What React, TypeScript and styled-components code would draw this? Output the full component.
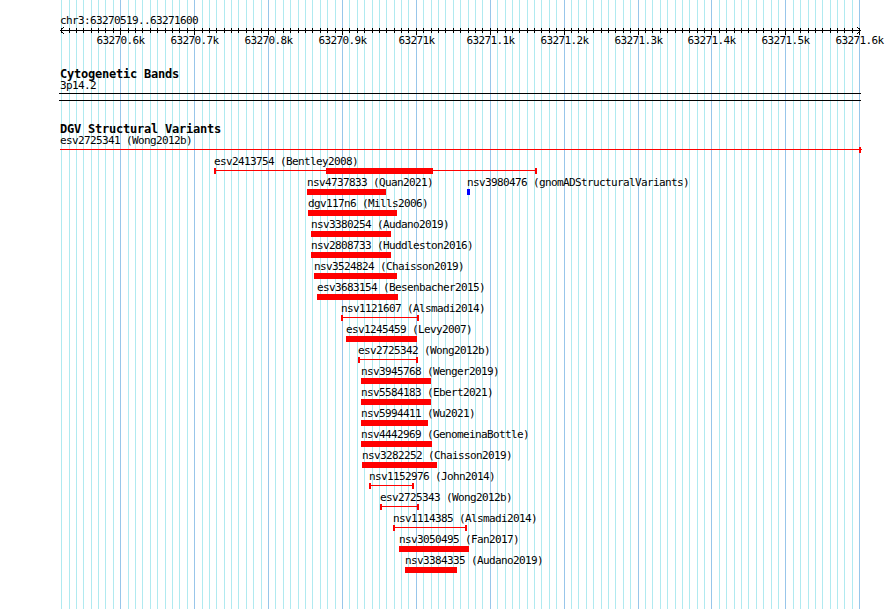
import React from 'react';
import styled, { createGlobalStyle } from 'styled-components';

const GlobalStyle = createGlobalStyle`
  html, body { margin: 0; padding: 0; background: #ffffff; }
  body {
    font-family: "DejaVu Sans Mono", "Liberation Mono", monospace;
    color: #000000;
  }
`;

const BP0 = 63270519;
const BP1 = 63271600;
const X0 = 60.4;
const PX_PER_BP = 0.739;
const LEFT = 60;
const px = (bp: number) => Math.round(X0 + (bp - BP0) * PX_PER_BP);

const RED = '#ff0000';
const BLUE = '#0000ff';
const GRID_MINOR = '#b0eaf0';
const GRID_MAJOR = '#98c6ea';

const smallText = `
  font-family: "DejaVu Sans Mono", "Liberation Mono", monospace;
  font-size: 11px;
  letter-spacing: -0.62px;
  white-space: nowrap;
`;

const Page = styled.div`
  position: relative;
  width: 890px;
  height: 609px;
  overflow: hidden;
  background: #ffffff;
`;

const GridLayer = styled.svg`
  position: absolute;
  left: 0;
  top: 0;
  width: 890px;
  height: 609px;
  z-index: 0;
`;

const Column = styled.div`
  position: relative;
  z-index: 1;
  padding-left: ${LEFT}px;
  width: 801px;
`;

const Ruler = styled.div`
  padding-top: 14px;
`;

const PositionLabel = styled.div`
  ${smallText}
  line-height: 14px;
  height: 14px;
`;

const Scale = styled.div`
  position: relative;
  height: 22px;
`;

const ScaleDrawing = styled.svg`
  position: absolute;
  left: 0;
  top: 0;
  overflow: visible;
`;

const TickLabel = styled.span`
  ${smallText}
  position: absolute;
  top: 7px;
  line-height: 12px;
  transform: translateX(-50%);
`;

const Track = styled.section<{ $gap: number }>`
  margin-top: ${(p) => p.$gap}px;
`;

const TrackTitle = styled.h2`
  margin: 0;
  font-family: "DejaVu Sans Mono", "Liberation Mono", monospace;
  font-size: 12px;
  letter-spacing: -0.22px;
  font-weight: bold;
  line-height: 12px;
  height: 12px;
  white-space: nowrap;
`;

const FeatureRow = styled.div`
  position: relative;
  height: 21px;
`;

const Feature = styled.div`
  position: absolute;
  top: 0;
  display: flex;
  flex-direction: column;
`;

const FeatureLabel = styled.span`
  ${smallText}
  display: block;
  line-height: 12px;
  height: 12px;
`;

const Glyph = styled.div`
  position: relative;
  height: 9px;
`;

const Bar = styled.div<{ $color: string }>`
  height: 6px;
  background: ${(p) => p.$color};
`;

const Span = styled.div`
  position: relative;
  height: 6px;
  &::before {
    content: '';
    position: absolute;
    left: 0;
    right: 0;
    top: 2px;
    height: 1px;
    background: ${RED};
  }
`;

const Cap = styled.div<{ $side: 'left' | 'right' }>`
  position: absolute;
  top: 0;
  ${(p) => p.$side}: 0;
  width: 2px;
  height: 6px;
  background: ${RED};
`;

const Thick = styled.div`
  position: absolute;
  top: 0;
  height: 6px;
  background: ${RED};
`;

const BandBox = styled.div`
  margin: 1px 0 0 -1px;
  width: 802px;
  height: 6px;
  border-top: 1px solid #000000;
  border-bottom: 1px solid #000000;
`;

type Feat = {
  id: string;
  src: string;
  x: number;
  end: number;
  kind: 'bar' | 'span';
  color?: string;
  thick?: [number, number];
  capLeft?: boolean;
  capRightInset?: number;
};

const bar = (id: string, src: string, x: number, end: number, color = RED): Feat => ({
  id, src, x, end, kind: 'bar', color,
});
const span = (id: string, src: string, x: number, end: number, thick?: [number, number]): Feat => ({
  id, src, x, end, kind: 'span', thick, capLeft: true,
});

const rows: Feat[][] = [
  [{ id: 'esv2725341', src: 'Wong2012b', x: 60, end: 862, kind: 'span', capLeft: false, capRightInset: 1 }],
  [span('esv2413754', 'Bentley2008', 214, 537, [326, 433])],
  [bar('nsv4737833', 'Quan2021', 307, 386), bar('nsv3980476', 'gnomADStructuralVariants', 467, 470, BLUE)],
  [bar('dgv117n6', 'Mills2006', 308, 397)],
  [bar('nsv3380254', 'Audano2019', 311, 391)],
  [bar('nsv2808733', 'Huddleston2016', 311, 391)],
  [bar('nsv3524824', 'Chaisson2019', 314, 397)],
  [bar('esv3683154', 'Besenbacher2015', 317, 398)],
  [span('nsv1121607', 'Alsmadi2014', 341, 419)],
  [bar('esv1245459', 'Levy2007', 346, 417)],
  [span('esv2725342', 'Wong2012b', 358, 418)],
  [bar('nsv3945768', 'Wenger2019', 361, 431)],
  [bar('nsv5584183', 'Ebert2021', 361, 431)],
  [bar('nsv5994411', 'Wu2021', 361, 428)],
  [bar('nsv4442969', 'GenomeinaBottle', 361, 432)],
  [bar('nsv3282252', 'Chaisson2019', 362, 437)],
  [span('nsv1152976', 'John2014', 369, 414)],
  [span('esv2725343', 'Wong2012b', 380, 419)],
  [span('nsv1114385', 'Alsmadi2014', 393, 467)],
  [bar('nsv3050495', 'Fan2017', 399, 469)],
  [bar('nsv3384335', 'Audano2019', 405, 457)],
];

const gridPositions: { x: number; major: boolean }[] = [];
for (let bp = 63270520; bp <= BP1; bp += 10) {
  gridPositions.push({ x: px(bp), major: bp % 100 === 0 });
}

const majorLabels = gridPositions
  .map((g, i) => ({ ...g, bp: 63270520 + i * 10 }))
  .filter((g) => g.major)
  .map((g) => {
    const k = g.bp / 1000;
    const text = Number.isInteger(k) ? `${k}k` : `${k.toFixed(1)}k`;
    return { x: g.x, text };
  });

function Grid() {
  return (
    <GridLayer viewBox="0 0 890 609" shapeRendering="crispEdges">
      {gridPositions.map((g) => (
        <line
          key={g.x}
          x1={g.x + 0.5}
          x2={g.x + 0.5}
          y1={0}
          y2={609}
          stroke={g.major ? GRID_MAJOR : GRID_MINOR}
          strokeWidth={1}
        />
      ))}
    </GridLayer>
  );
}

function ScaleBar() {
  const w = 802;
  return (
    <Scale>
      <ScaleDrawing width={w} height={10} viewBox={`0 0 ${w} 10`} shapeRendering="crispEdges">
        <line x1={0} x2={801} y1={2.5} y2={2.5} stroke="#000" strokeWidth={1} />
        {gridPositions.map((g) => (
          <line
            key={g.x}
            x1={g.x - LEFT + 0.5}
            x2={g.x - LEFT + 0.5}
            y1={0}
            y2={g.major ? 7 : 5}
            stroke="#000"
            strokeWidth={1}
          />
        ))}
        <polyline points="4,-1 0.5,2.5 4,6" fill="none" stroke="#000" strokeWidth={1} shapeRendering="auto" />
        <polyline points="797,-1 800.5,2.5 797,6" fill="none" stroke="#000" strokeWidth={1} shapeRendering="auto" />
      </ScaleDrawing>
      {majorLabels.map((l) => (
        <TickLabel key={l.text} style={{ left: l.x - LEFT + 0.5 }}>
          {l.text}
        </TickLabel>
      ))}
    </Scale>
  );
}

function FeatureGlyph({ f }: { f: Feat }) {
  const w = f.end - f.x;
  if (f.kind === 'bar') {
    return (
      <Glyph style={{ width: w }}>
        <Bar $color={f.color ?? RED} />
      </Glyph>
    );
  }
  return (
    <Glyph style={{ width: w }}>
      <Span>
        {f.thick && <Thick style={{ left: f.thick[0] - f.x, width: f.thick[1] - f.thick[0] }} />}
        {f.capLeft && <Cap $side="left" />}
        <Cap $side="right" style={f.capRightInset ? { right: f.capRightInset } : undefined} />
      </Span>
    </Glyph>
  );
}

export default function App() {
  return (
    <>
      <GlobalStyle />
      <Page>
        <Grid />
        <Column>
          <Ruler>
            <PositionLabel>chr3:63270519..63271600</PositionLabel>
            <ScaleBar />
          </Ruler>

          <Track $gap={18}>
            <TrackTitle>Cytogenetic Bands</TrackTitle>
            <FeatureRow>
              <FeatureLabel>3p14.2</FeatureLabel>
              <BandBox />
            </FeatureRow>
          </Track>

          <Track $gap={22}>
            <TrackTitle>DGV Structural Variants</TrackTitle>
            {rows.map((row, i) => (
              <FeatureRow key={i}>
                {row.map((f) => (
                  <Feature key={f.id} style={{ left: f.x - LEFT }}>
                    <FeatureLabel>
                      {f.id} ({f.src})
                    </FeatureLabel>
                    <FeatureGlyph f={f} />
                  </Feature>
                ))}
              </FeatureRow>
            ))}
          </Track>
        </Column>
      </Page>
    </>
  );
}
